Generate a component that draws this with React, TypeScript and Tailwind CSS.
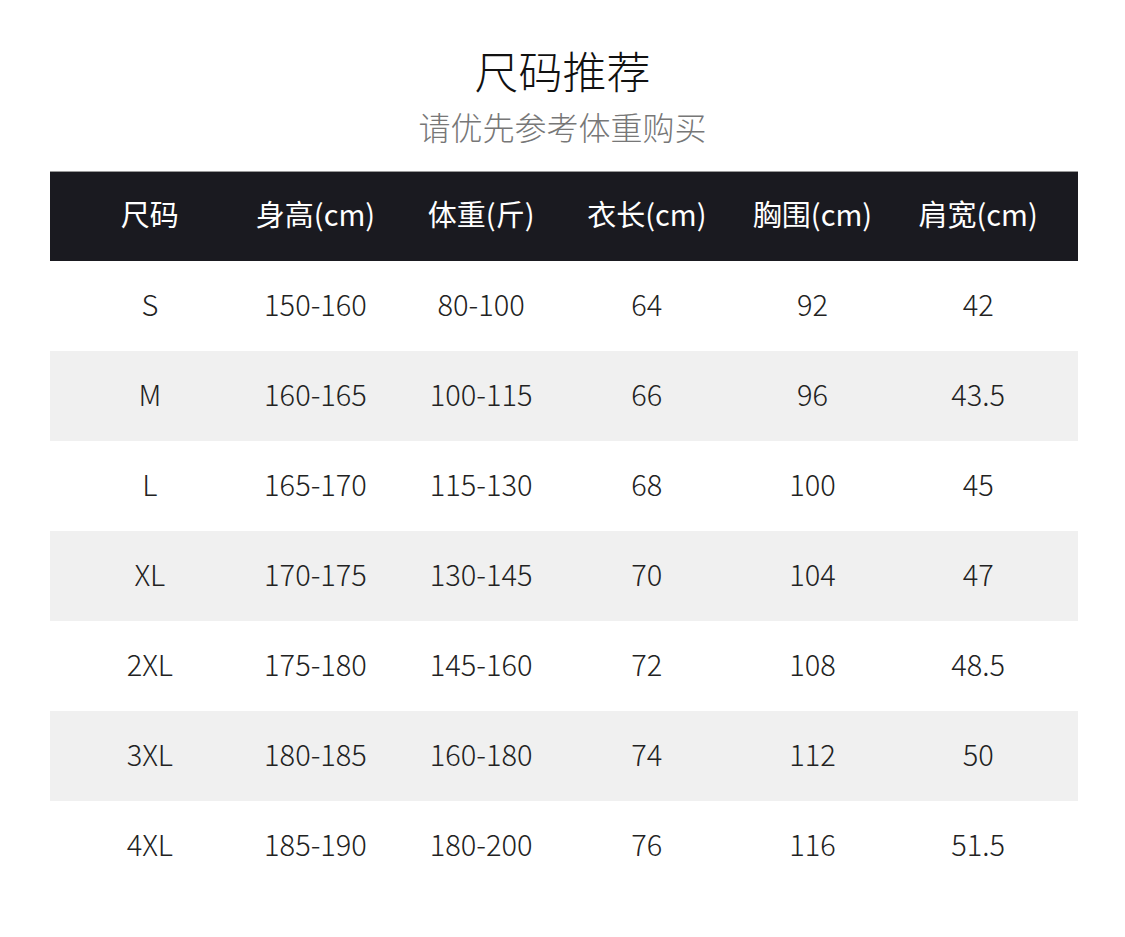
const headers = ['尺码', '身高(cm)', '体重(斤)', '衣长(cm)', '胸围(cm)', '肩宽(cm)'];

const rows = [
    ['S', '150-160', '80-100', '64', '92', '42'],
    ['M', '160-165', '100-115', '66', '96', '43.5'],
    ['L', '165-170', '115-130', '68', '100', '45'],
    ['XL', '170-175', '130-145', '70', '104', '47'],
    ['2XL', '175-180', '145-160', '72', '108', '48.5'],
    ['3XL', '180-185', '160-180', '74', '112', '50'],
    ['4XL', '185-190', '180-200', '76', '116', '51.5'],
];

function App() {
    return (
        <div className="w-[1125px] h-[937px] bg-white font-['Noto_Sans_CJK_SC','Noto_Sans',sans-serif]">
            <div className="flex flex-col items-center pt-[41px]">
                <h1 className="text-[44px] leading-[58px] text-[#111] font-light">尺码推荐</h1>
                <p className="text-[32px] leading-[40px] text-[#777] font-light mt-[7px]">请优先参考体重购买</p>
            </div>
            <div className="w-[1028px] ml-[50px] mt-[25px]">
                <div className="grid grid-cols-6 h-[90px] items-center px-[17px] pb-[6px] bg-[#1a1a20] border-t border-[#999]">
                    {headers.map((h) => (
                        <span key={h} className="text-center text-white text-[29px]">
                            {h}
                        </span>
                    ))}
                </div>
                {rows.map((r, i) => (
                    <div
                        key={r[0]}
                        className={`grid grid-cols-6 h-[90px] items-center px-[17px] pb-[4px] ${i % 2 === 1 ? 'bg-[#f0f0f0]' : 'bg-white'}`}
                    >
                        {r.map((c, j) => (
                            <span key={j} className="text-center text-[#222] text-[29px] font-light">
                                {c}
                            </span>
                        ))}
                    </div>
                ))}
            </div>
        </div>
    );
}

export default App;
